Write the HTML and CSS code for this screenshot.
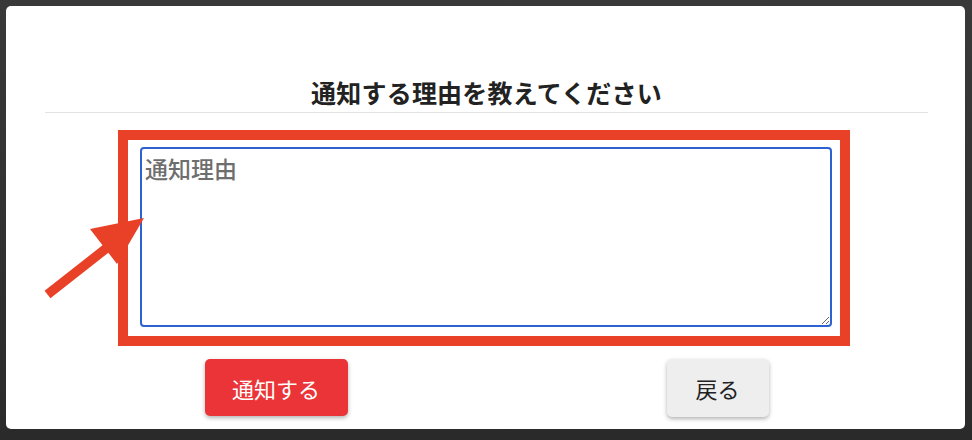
FILE: index.html
```html
<!DOCTYPE html>
<html lang="ja">
<head>
  <meta charset="UTF-8" />
  <meta name="viewport" content="width=device-width, initial-scale=1.0"/>
  <title>通知理由</title>
  <link rel="stylesheet" href="styles.css">
</head>
<body>
  <div class="dialog">
    <h2 class="dialog-title">通知する理由を教えてください</h2>
    <div class="highlight">
      <textarea class="reason" placeholder="通知理由"></textarea>
    </div>
    <div class="actions">
      <button class="btn btn-notify">通知する</button>
      <button class="btn btn-back">戻る</button>
    </div>
  </div>
  <!-- 注釈の矢印 -->
  <svg class="arrow" width="972" height="440" viewBox="0 0 972 440">
    <line x1="47.5" y1="294.5" x2="108" y2="247" stroke="#e84127" stroke-width="9.5" />
    <polygon points="144,218 90,229 117,264" fill="#e84127" />
  </svg>
</body>
</html>
```

FILE: styles.css
```css
* { margin: 0; padding: 0; box-sizing: border-box; }
body { font-family: "Noto Sans CJK JP", "Noto Sans", sans-serif; color: #222; background: linear-gradient(#393939, #2a2a2a); width: 972px; height: 440px; overflow: hidden; position: relative; padding: 6px 7px 0 6px; }
.dialog { background: #fff; border-radius: 5px; height: 423px; padding: 71px 37px 12px 39px; }
.dialog-title { font-size: 25px; font-weight: bold; line-height: 30px; text-align: center; letter-spacing: 0.2px; padding-bottom: 5px; border-bottom: 1px solid #e3e3e3; margin-bottom: 17px; }
.highlight { width: 732px; margin-left: 73px; border: 10px solid #e84127; padding: 7px 8px 9px 12px; }
.reason { display: block; width: 692px; height: 180px; border: 2px solid #2d63d0; border-radius: 4px; padding: 3px 3px; font-family: inherit; font-size: 23px; font-weight: 500; line-height: 1.4; color: #222; outline: none; }
.reason::placeholder { color: #6e6e6e; }
.actions { display: flex; justify-content: space-around; margin-top: 13px; }
.btn { border: none; border-radius: 5px; font-family: inherit; font-size: 22px; height: 58px; cursor: pointer; box-shadow: 0 2px 4px rgba(0,0,0,0.3); }
.btn-notify { width: 143px; height: 57px; background: #eb3437; color: #fff; }
.btn-back { width: 102px; background: #eeeeee; color: #222; }
.arrow { position: absolute; left: 0; top: 0; pointer-events: none; }
```
